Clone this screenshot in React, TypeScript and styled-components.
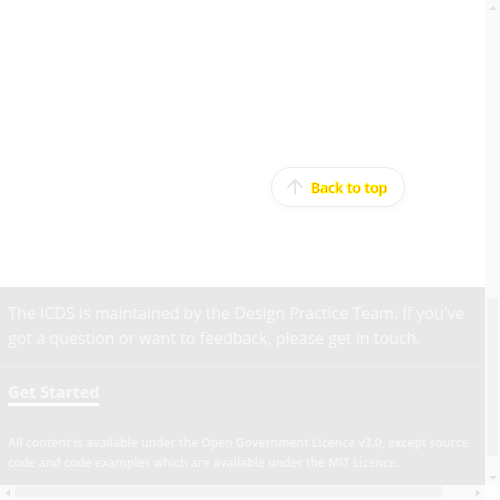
import React from 'react'
import styled, { createGlobalStyle } from 'styled-components'
import { ArrowUp } from 'lucide-react'

const GlobalStyle = createGlobalStyle`
  html, body {
    margin: 0;
    padding: 0;
    overflow: hidden;
    background: #ffffff;
    font-family: "Open Sans", "Liberation Sans", sans-serif;
  }
`;

// window chrome: page area plus the two scroll bars
const Frame = styled.div`
  width: 500px;
  height: 500px;
  display: grid;
  grid-template-columns: 485px 15px;
  grid-template-rows: 485px 15px;
  background: #ffffff;
`;

const Main = styled.div`
  overflow: hidden;
  display: flex;
  flex-direction: column;
  justify-content: flex-end;
`;

const Page = styled.div`
  width: 517px;
  flex-shrink: 0;
  display: flex;
  flex-direction: column;
`;

const Content = styled.main`
  height: 286px;
  display: flex;
  flex-direction: column;
  justify-content: flex-end;
  align-items: flex-end;
  padding: 0 112px 80px 0;
  box-sizing: border-box;
`;

const BackToTop = styled.a`
  box-sizing: border-box;
  width: 134px;
  height: 40px;
  display: flex;
  align-items: center;
  gap: 4px;
  padding: 0 0 0 11px;
  border: 1px solid #ececec;
  border-radius: 20px;
  background: #ffffff;
  box-shadow: 0 2px 8px rgba(0, 0, 0, 0.04);
  color: #e6e6e6;
  text-decoration: none;
  cursor: pointer;
`;

const BackLabel = styled.span`
  font-size: 14px;
  font-weight: 600;
  color: #ff0000;
  -webkit-text-stroke: 1px #ffff00;
  line-height: 1;
  margin-top: 2px;
`;

const Footer = styled.footer`
  background: #e8e8e8;
  color: #ffffff;
  padding: 0 8px;
`;

const FooterInner = styled.div`
  max-width: 480px;
`;

const Intro = styled.p`
  margin: 0;
  padding: 14px 0 15px;
  font-size: 16px;
  line-height: 25px;
  color: #f8f8f8;
`;

const Divider = styled.hr`
  margin: 0 -8px;
  border: 0;
  border-top: 1px solid #ededed;
`;

const LinkRow = styled.div`
  padding: 14px 0 0;
`;

const StartLink = styled.a`
  display: inline-block;
  font-size: 16px;
  font-weight: 700;
  line-height: 22px;
  color: #f8f8f8;
  text-decoration: none;
  border-bottom: 3px solid #ffffff;
`;

const Licence = styled.p`
  margin: 0;
  padding: 27px 0 12px;
  font-size: 12px;
  font-weight: 600;
  line-height: 20px;
  color: #f6f6f6;
`;

const ScrollBar = styled.div<{ $vertical?: boolean }>`
  display: flex;
  flex-direction: ${p => (p.$vertical ? 'column' : 'row')};
  background: #fafafa;
`;

const ScrollButton = styled.div`
  width: 15px;
  height: 15px;
  flex-shrink: 0;
  display: flex;
  align-items: center;
  justify-content: center;
`;

const Triangle = styled.span<{ $dir: 'up' | 'down' | 'left' | 'right' }>`
  width: 0;
  height: 0;
  border: 4px solid transparent;
  ${p => p.$dir === 'up' && 'border-bottom-color: #e2e2e2; border-top-width: 0;'}
  ${p => p.$dir === 'down' && 'border-top-color: #e2e2e2; border-bottom-width: 0;'}
  ${p => p.$dir === 'left' && 'border-right-color: #e2e2e2; border-left-width: 0;'}
  ${p => p.$dir === 'right' && 'border-left-color: #e2e2e2; border-right-width: 0;'}
`;

const Track = styled.div<{ $vertical?: boolean; $offset: number }>`
  flex: 1;
  display: flex;
  flex-direction: ${p => (p.$vertical ? 'column' : 'row')};
  ${p => (p.$vertical ? `padding: ${p.$offset}px 2px 0 2px;` : `padding: 1px 0 3px ${p.$offset}px;`)}
`;

const Thumb = styled.div<{ $vertical?: boolean; $size: number }>`
  background: #f3f3f3;
  ${p => (p.$vertical ? `height: ${p.$size}px;` : `width: ${p.$size}px;`)}
  ${p => (p.$vertical ? 'width: 11px;' : 'height: 11px;')}
`;

const Corner = styled.div`
  background: #fdfdfd;
`;

export default function App() {
  return (
    <>
      <GlobalStyle />
      <Frame>
        <Main>
          <Page>
            <Content>
              <BackToTop>
                <ArrowUp size={24} strokeWidth={2} />
                <BackLabel>Back to top</BackLabel>
              </BackToTop>
            </Content>
            <Footer>
              <FooterInner>
                <Intro>
                  The ICDS is maintained by the Design Practice Team. If you've got a question or want to feedback, please get in touch.
                </Intro>
              </FooterInner>
              <Divider />
              <FooterInner>
                <LinkRow>
                  <StartLink>Get Started</StartLink>
                </LinkRow>
                <Licence>
                  All content is available under the Open Government Licence v3.0, except source code and code examples which are available under the MIT Licence.
                </Licence>
              </FooterInner>
            </Footer>
          </Page>
        </Main>
        <ScrollBar $vertical>
          <ScrollButton><Triangle $dir="up" /></ScrollButton>
          <Track $vertical $offset={283}>
            <Thumb $vertical $size={158} />
          </Track>
          <ScrollButton><Triangle $dir="down" /></ScrollButton>
        </ScrollBar>
        <ScrollBar>
          <ScrollButton><Triangle $dir="left" /></ScrollButton>
          <Track $offset={0}>
            <Thumb $size={427} />
          </Track>
          <ScrollButton><Triangle $dir="right" /></ScrollButton>
        </ScrollBar>
        <Corner />
      </Frame>
    </>
  )
}
